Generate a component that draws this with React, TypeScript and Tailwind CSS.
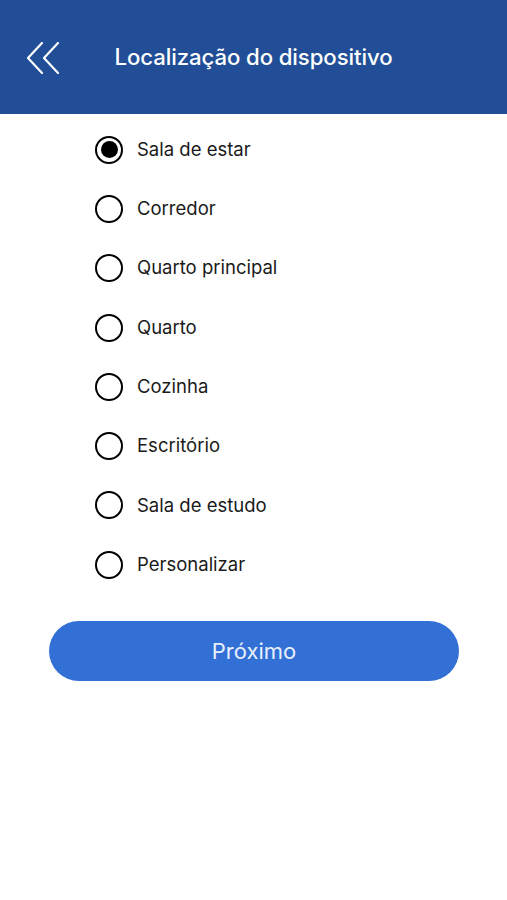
import { useState } from "react";

const rooms = [
  "Sala de estar",
  "Corredor",
  "Quarto principal",
  "Quarto",
  "Cozinha",
  "Escritório",
  "Sala de estudo",
  "Personalizar",
];

function BackIcon() {
  return (
    <svg width="36" height="34" viewBox="0 0 36 34" fill="none" stroke="white" strokeWidth="2.2" strokeLinecap="round" strokeLinejoin="round">
      <path d="M16 2 L2 17 L16 32" />
      <path d="M32 2 L18 17 L32 32" />
    </svg>
  );
}

export default function App() {
  const [selected, setSelected] = useState("Sala de estar");

  return (
    <div className="min-h-[900px] w-full bg-white" style={{ fontFamily: "Inter, 'Noto Sans', sans-serif" }}>
      <header className="relative flex h-[114px] items-center justify-center bg-[#214e96]">
        <button className="absolute left-[26px] top-[41px]">
          <BackIcon />
        </button>
        <h1 className="text-[22.2px] font-medium text-white tracking-[-0.1px]">Localização do dispositivo</h1>
      </header>

      <div className="flex flex-col pl-[95px] pt-[6px]">
        {rooms.map((room) => (
          <label
            key={room}
            className="flex h-[59.3px] cursor-pointer items-center gap-[14px]"
            onClick={() => setSelected(room)}
          >
            <span className="flex h-[28px] w-[28px] items-center justify-center rounded-full border-[2.5px] border-black">
              {selected === room && <span className="h-[17px] w-[17px] rounded-full bg-black" />}
            </span>
            <span className="text-[18.5px] text-[#1a1a1a]">{room}</span>
          </label>
        ))}
      </div>

      <div className="pl-[49px] pr-[48px] pt-[27px]">
        <button className="flex h-[60px] w-full items-center justify-center rounded-full bg-[#3270d6] text-[22px] text-[#e8f0ff]">
          Próximo
        </button>
      </div>
    </div>
  );
}
